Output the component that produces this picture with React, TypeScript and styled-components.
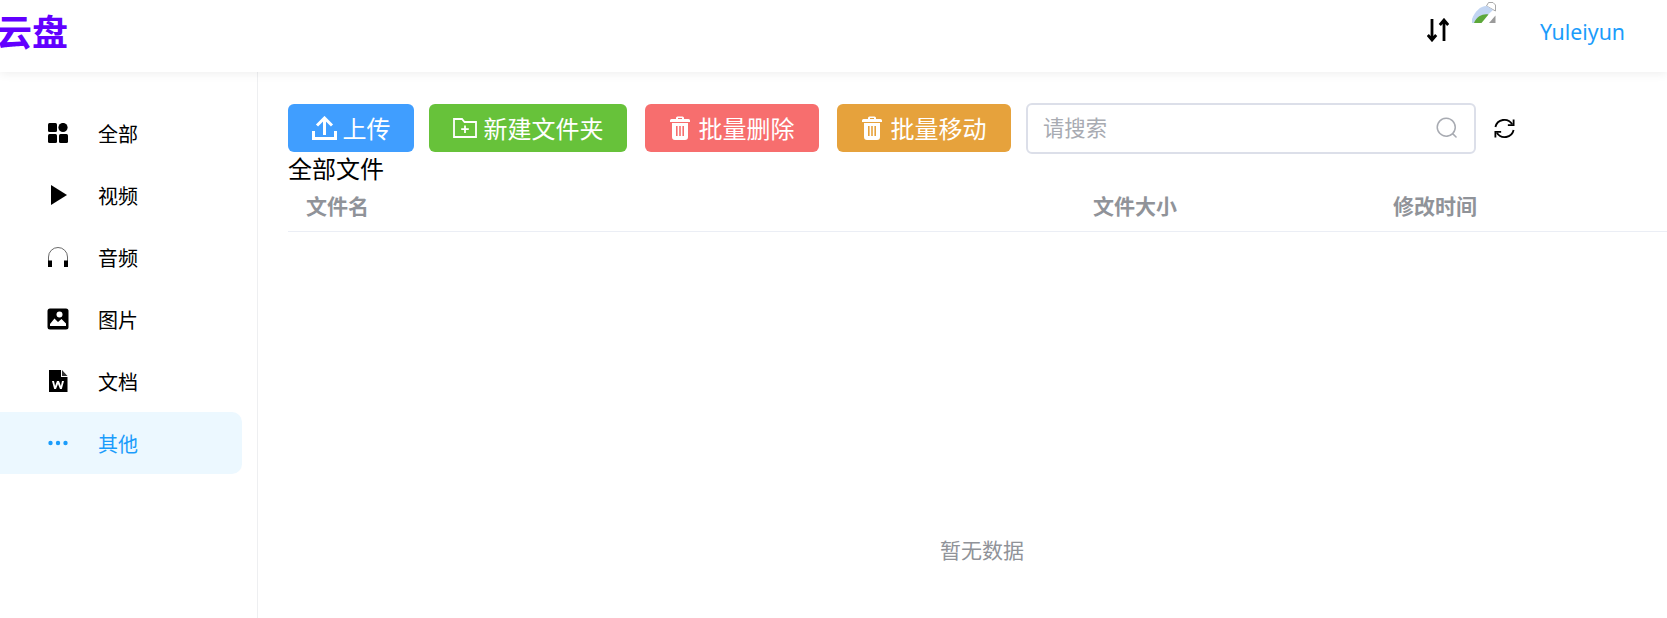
import styled, { createGlobalStyle } from 'styled-components';

const GlobalStyle = createGlobalStyle`
  html, body {
    margin: 0;
    padding: 0;
    height: 618px;
    overflow: hidden;
    background: #fff;
    font-family: "Noto Sans", "Noto Sans CJK SC", sans-serif;
  }
`;

const menuItems = [
  { label: '全部', icon: 'all' },
  { label: '视频', icon: 'video' },
  { label: '音频', icon: 'audio' },
  { label: '图片', icon: 'image' },
  { label: '文档', icon: 'doc' },
  { label: '其他', icon: 'more' },
];

function MenuIcon({ name }: { name: string }) {
  if (name === 'all') {
    return (
      <svg width="20" height="20" viewBox="0 0 20 20" fill="#000">
        <rect x="0" y="0" width="9" height="9" rx="1.5" />
        <circle cx="15" cy="4.5" r="4.6" />
        <rect x="0" y="11" width="9" height="9" rx="1.5" />
        <rect x="11" y="11" width="9" height="9" rx="1.5" />
      </svg>
    );
  }
  if (name === 'video') {
    return (
      <svg width="20" height="20" viewBox="0 0 20 20" fill="#000">
        <path d="M3 0 L19 10 L3 20 Z" />
      </svg>
    );
  }
  if (name === 'audio') {
    return (
      <svg width="22" height="20" viewBox="0 0 22 20">
        <path d="M1.5 14 V10 a9.5 9.5 0 0 1 19 0 V14" fill="none" stroke="#444" strokeWidth="0.8" />
        <rect x="1" y="13.5" width="4" height="6.5" fill="#000" />
        <rect x="17" y="13.5" width="4" height="6.5" fill="#000" />
      </svg>
    );
  }
  if (name === 'image') {
    return (
      <svg width="22" height="22" viewBox="0 0 22 22">
        <rect x="0.5" y="0.5" width="21" height="21" rx="2.5" fill="#000" />
        <circle cx="12.5" cy="6.5" r="3" fill="#fff" />
        <path d="M3 18 L3 16 L7.5 10.5 L11 14 L14.5 11 L19 15.5 L19 18 Z" fill="#fff" />
      </svg>
    );
  }
  if (name === 'doc') {
    return (
      <svg width="20" height="22" viewBox="0 0 20 22">
        <path d="M1 0 H13 V7 H19.5 V22 H1 Z" fill="#000" />
        <path d="M14 0 L19.5 6 H14 Z" fill="#333" />
        <path d="M4 11 L6.2 19 H8 L10 14 L12 19 H13.8 L16 11 H14 L12.9 16 L11 11 H9 L7.1 16 L6 11 Z" fill="#fff" />
      </svg>
    );
  }
  return (
    <svg width="20" height="6" viewBox="0 0 20 6" fill="#1a9cfb">
      <circle cx="2.5" cy="3" r="2.2" />
      <circle cx="10" cy="3" r="2.2" />
      <circle cx="17.5" cy="3" r="2.2" />
    </svg>
  );
}

function UploadIcon() {
  return (
    <svg width="25" height="24" viewBox="0 0 25 24" fill="none" stroke="#fff" strokeWidth="3">
      <path d="M12.5 19 V2" />
      <path d="M5 9.5 L12.5 2 L20 9.5" />
      <path d="M1.5 15 V22.5 H23.5 V15" />
    </svg>
  );
}

function FolderIcon() {
  return (
    <svg width="24" height="20" viewBox="0 0 24 20" fill="none" stroke="#fff" strokeWidth="1.8">
      <path d="M1 1 H9 L11.5 4 H23 V19 H1 Z" />
      <path d="M12 7.5 V15 M8.2 11.2 H15.8" />
    </svg>
  );
}

function TrashIcon() {
  return (
    <svg width="20" height="24" viewBox="0 0 20 24" fill="#fff">
      <path d="M6 3 V2 Q6 0.5 7.5 0.5 H12.5 Q14 0.5 14 2 V3 H18.5 Q20 3 20 4.5 V6 H0 V4.5 Q0 3 1.5 3 Z M8 3 H12 V2 H8 Z" fillRule="evenodd" />
      <path d="M2 7 H18 V21 Q18 24 15 24 H5 Q2 24 2 21 Z M6 10 V20 H7.6 V10 Z M9.2 10 V20 H10.8 V10 Z M12.4 10 V20 H14 V10 Z" fillRule="evenodd" />
    </svg>
  );
}

function SearchIcon() {
  return (
    <svg width="24" height="24" viewBox="0 0 1024 1024" fill="#a8abb2">
      <path d="m795.904 750.72 124.992 124.928a32 32 0 0 1-45.248 45.248L750.656 795.904a416 416 0 1 1 45.248-45.248zM480 832a352 352 0 1 0 0-704 352 352 0 0 0 0 704z" />
    </svg>
  );
}

function RefreshIcon() {
  return (
    <svg width="23" height="23" viewBox="0 0 24 24" fill="none" stroke="#000" strokeWidth="1.9">
      <path d="M2.5 10.5 A9.6 9.6 0 0 1 20 7.5" />
      <path d="M21.5 2.5 V8.5 H15.5" />
      <path d="M21.5 13.5 A9.6 9.6 0 0 1 4 16.5" />
      <path d="M2.5 21.5 V15.5 H8.5" />
    </svg>
  );
}

function BrokenImage() {
  return (
    <svg width="24" height="22" viewBox="0 0 24 22">
      <path d="M16.5 0.5 H21 L23.5 3 V9 L14.5 4 Z" fill="#fff" stroke="#a8a8a8" strokeWidth="1" />
      <path d="M0 21 V17 C3 9 9 3.5 15 4 L21 8 L7 21 Z" fill="#c2d5f2" />
      <path d="M2 21 C5 14 11 11.5 16.5 12.5 L9.5 21 Z" fill="#5da83a" />
      <path d="M17 21 L23.5 13.5 V21 Z" fill="#9a9a9a" />
    </svg>
  );
}

export default function App() {
  return (
    <>
      <GlobalStyle />
      <Page>
        <Header>
          <Logo>云盘</Logo>
          <HeaderRight>
            <TransferIcon viewBox="0 0 22 24" fill="none" stroke="#000" strokeWidth="2.8">
              <path d="M5 1 V22 M0.8 17 L5 22 L9.2 17" />
              <path d="M17 23 V2 M12.8 7 L17 2 L21.2 7" />
            </TransferIcon>
            <Avatar>
              <BrokenImage />
            </Avatar>
            <UserName>Yuleiyun</UserName>
          </HeaderRight>
        </Header>
        <Body>
          <Sidebar>
            {menuItems.map((item) => (
              <MenuItem key={item.label} $active={item.icon === 'more'}>
                <MenuIconBox>
                  <MenuIcon name={item.icon} />
                </MenuIconBox>
                {item.label}
              </MenuItem>
            ))}
          </Sidebar>
          <Main>
            <Toolbar>
              <ActionButton $bg="#409eff" $width={126} $gap={6}>
                <UploadIcon />
                <ButtonLabel>上传</ButtonLabel>
              </ActionButton>
              <ActionButton $bg="#67c23a" $width={198} $gap={7}>
                <FolderIcon />
                <ButtonLabel>新建文件夹</ButtonLabel>
              </ActionButton>
              <ActionButton $bg="#f76e6e" $width={174} $gap={9}>
                <TrashIcon />
                <ButtonLabel>批量删除</ButtonLabel>
              </ActionButton>
              <ActionButton $bg="#e6a23c" $width={174} $gap={9}>
                <TrashIcon />
                <ButtonLabel>批量移动</ButtonLabel>
              </ActionButton>
              <SearchBox>
                <SearchText>请搜索</SearchText>
                <SearchIcon />
              </SearchBox>
              <RefreshButton>
                <RefreshIcon />
              </RefreshButton>
            </Toolbar>
            <SectionTitle>全部文件</SectionTitle>
            <TableHead>
              <HeadCell>文件名</HeadCell>
              <HeadCell>文件大小</HeadCell>
              <HeadCell>修改时间</HeadCell>
            </TableHead>
            <EmptyText>暂无数据</EmptyText>
          </Main>
        </Body>
      </Page>
    </>
  );
}

const Page = styled.div`
  width: 1667px;
  height: 618px;
  overflow: hidden;
  display: flex;
  flex-direction: column;
`;

const Header = styled.header`
  height: 72px;
  flex-shrink: 0;
  display: flex;
  justify-content: space-between;
  background: #fff;
  box-shadow: 0 1px 10px rgba(0, 0, 0, 0.08);
  position: relative;
`;

const Logo = styled.div`
  margin-left: -4px;
  font-size: 36px;
  line-height: 66px;
  font-weight: 700;
  color: #6200ff;
`;

const HeaderRight = styled.div`
  display: flex;
  align-items: flex-start;
  padding-right: 42px;
`;

const TransferIcon = styled.svg`
  width: 22px;
  height: 24px;
  margin: 18px 23px 0 0;
`;

const Avatar = styled.div`
  width: 24px;
  height: 22px;
  margin: 2px 44px 0 0;
`;

const UserName = styled.div`
  margin-top: 18px;
  font-size: 21.33px;
  line-height: 28px;
  color: #1a9cfb;
`;

const Body = styled.div`
  flex: 1;
  display: flex;
  min-height: 0;
`;

const Sidebar = styled.aside`
  width: 258px;
  flex-shrink: 0;
  box-sizing: border-box;
  padding: 30px 15px 0 0;
  border-right: 1px solid #eeeff1;
`;

const MenuItem = styled.div<{ $active?: boolean }>`
  height: 62px;
  display: flex;
  align-items: center;
  padding-left: 46px;
  font-size: 20px;
  color: ${(p) => (p.$active ? '#1a9cfb' : '#000')};
  background: ${(p) => (p.$active ? '#ecf8ff' : 'transparent')};
  border-radius: ${(p) => (p.$active ? '0 10px 10px 0' : '0')};
`;

const MenuIconBox = styled.span`
  width: 24px;
  height: 24px;
  margin-right: 28px;
  display: flex;
  align-items: center;
  justify-content: center;
`;

const Main = styled.main`
  flex: 1;
  min-width: 0;
  padding: 30px 0 0 30px;
  overflow: hidden;
`;

const Toolbar = styled.div`
  display: flex;
  align-items: center;
  height: 52px;
`;

const ActionButton = styled.button<{ $bg: string; $width: number; $gap: number }>`
  width: ${(p) => p.$width}px;
  height: 48px;
  margin-right: 18px;
  padding: 0;
  display: flex;
  align-items: center;
  justify-content: center;
  gap: ${(p) => p.$gap}px;
  border: none;
  border-radius: 6px;
  background: ${(p) => p.$bg};
  color: #fff;
  font-family: inherit;
  font-size: 24px;

  &:first-child {
    margin-right: 15px;
  }
`;

const ButtonLabel = styled.span`
  margin-top: -2px;
`;

const SearchBox = styled.div`
  width: 450px;
  height: 51px;
  box-sizing: border-box;
  margin-left: -3px;
  padding: 0 15px;
  display: flex;
  align-items: center;
  justify-content: space-between;
  border: 2px solid #dcdfe9;
  border-radius: 6px;
`;

const SearchText = styled.span`
  margin-top: -3px;
  font-size: 21.33px;
  color: #a8abb2;
`;

const RefreshButton = styled.div`
  margin-left: 17px;
  display: flex;
`;

const SectionTitle = styled.div`
  margin-top: -1px;
  font-size: 24px;
  line-height: 32px;
  color: #000;
`;

const TableHead = styled.div`
  width: 1388px;
  height: 47px;
  box-sizing: border-box;
  display: grid;
  grid-template-columns: 787px 300px 1fr;
  align-items: center;
  padding: 0 0 6px 18px;
  border-bottom: 1px solid #ebeef5;
`;

const HeadCell = styled.div`
  font-size: 21px;
  font-weight: 700;
  color: #909399;
`;

const EmptyText = styled.div`
  width: 1388px;
  padding-top: 304px;
  text-align: center;
  font-size: 21px;
  line-height: 28px;
  color: #909399;
`;
